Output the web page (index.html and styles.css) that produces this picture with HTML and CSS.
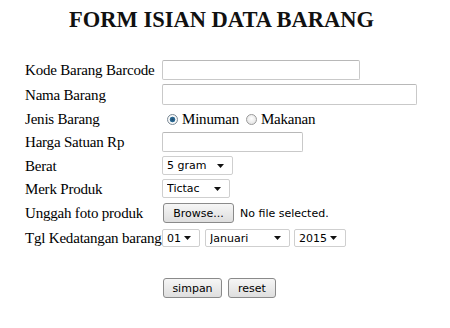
FILE: index.html
```html
<!DOCTYPE html>
<html lang="id">
<head>
    <meta charset="UTF-8">
    <title>Form Isian Data Barang</title>
    <link rel="stylesheet" href="styles.css">
</head>
<body>
    <h1 class="title">FORM ISIAN DATA BARANG</h1>

    <form class="item-form">
        <div class="row r1">
            <label for="kode">Kode Barang Barcode</label>
            <input type="text" id="kode" class="text-input w-kode">
        </div>
        <div class="row r2">
            <label for="nama">Nama Barang</label>
            <input type="text" id="nama" class="text-input w-nama">
        </div>
        <div class="row r3">
            <label>Jenis Barang</label>
            <div class="radios">
                <input type="radio" name="jenis" id="minuman" class="radio" checked>
                <label for="minuman">Minuman</label>
                <input type="radio" name="jenis" id="makanan" class="radio">
                <label for="makanan">Makanan</label>
            </div>
        </div>
        <div class="row r4">
            <label for="harga">Harga Satuan Rp</label>
            <input type="text" id="harga" class="text-input w-harga">
        </div>
        <div class="row r5">
            <label for="berat">Berat</label>
            <span class="select-wrap">
                <select id="berat" class="dropdown w-berat">
                    <option>5 gram</option>
                    <option>10 gram</option>
                </select>
                <svg class="caret" width="7" height="4" viewBox="0 0 7 4"><path d="M0 0H7L3.5 4Z" fill="#111"/></svg>
            </span>
        </div>
        <div class="row r6">
            <label for="merk">Merk Produk</label>
            <span class="select-wrap">
                <select id="merk" class="dropdown w-merk">
                    <option>Tictac</option>
                    <option>Mentos</option>
                </select>
                <svg class="caret" width="7" height="4" viewBox="0 0 7 4"><path d="M0 0H7L3.5 4Z" fill="#111"/></svg>
            </span>
        </div>
        <div class="row r7">
            <label>Unggah foto produk</label>
            <div class="file-field">
                <button type="button" class="btn btn-browse">Browse...</button>
                <span class="file-name">No file selected.</span>
            </div>
        </div>
        <div class="row r8">
            <label>Tgl Kedatangan barang</label>
            <div class="date-group">
                <span class="select-wrap">
                    <select class="dropdown w-tgl"><option>01</option></select>
                    <svg class="caret" width="7" height="4" viewBox="0 0 7 4"><path d="M0 0H7L3.5 4Z" fill="#111"/></svg>
                </span>
                <span class="select-wrap">
                    <select class="dropdown w-bulan"><option>Januari</option></select>
                    <svg class="caret" width="7" height="4" viewBox="0 0 7 4"><path d="M0 0H7L3.5 4Z" fill="#111"/></svg>
                </span>
                <span class="select-wrap">
                    <select class="dropdown w-tahun"><option>2015</option></select>
                    <svg class="caret" width="7" height="4" viewBox="0 0 7 4"><path d="M0 0H7L3.5 4Z" fill="#111"/></svg>
                </span>
            </div>
        </div>
        <div class="row actions">
            <span></span>
            <div class="buttons">
                <button type="submit" class="btn btn-save">simpan</button>
                <button type="reset" class="btn btn-reset">reset</button>
            </div>
        </div>
    </form>
</body>
</html>
```

FILE: styles.css
```css
* {
    box-sizing: border-box;
}

body {
    margin: 0;
    background: #fff;
    color: #000;
    font-family: "Liberation Serif", "Times New Roman", serif;
    font-size: 15px;
}

.title {
    margin: 6px 0 0;
    padding-right: 7px;
    font-size: 22.5px;
    line-height: 28px;
    font-weight: bold;
    text-align: center;
    color: #111;
}

.item-form {
    margin-top: 24px;
    padding-left: 25px;
}

.row {
    display: grid;
    grid-template-columns: 137px auto;
    align-items: center;
}

.row > * {
    justify-self: start;
}

.r1 { height: 24px; }
.r2 { height: 25px; }
.r3 { height: 24px; }
.r4 { height: 22px; }
.r5 { height: 25px; }
.r6 { height: 21px; }
.r7 { height: 28px; }
.r8 { height: 22px; }

.row > label,
.radios label {
    white-space: nowrap;
    line-height: 20px;
    letter-spacing: -0.2px;
}

.text-input {
    height: 20px;
    border: 1px solid #c9c9c9;
    border-top-color: #b8b8b8;
    border-radius: 2px;
    background: #fff;
    padding: 0 3px;
    outline: none;
}

.w-kode { width: 198px; }
.w-nama { width: 255px; height: 21px; }
.w-harga { width: 141px; }

.radios {
    display: flex;
    align-items: center;
    padding-left: 5px;
}

.radios label {
    margin-right: 7px;
}

.radio {
    appearance: none;
    -webkit-appearance: none;
    width: 11px;
    height: 11px;
    margin: 0 4px 0 0;
    border: 1px solid #9a9a9a;
    border-radius: 50%;
    background: radial-gradient(circle at 50% 40%, #fff, #dcdcdc);
}

.radio:checked {
    background: radial-gradient(circle, #1f4a6e 0, #2f6f99 2.5px, #fff 3.2px, #e2e2e2 100%);
    border-color: #7b8a96;
}

.select-wrap {
    position: relative;
    display: inline-block;
    line-height: 0;
}

.dropdown {
    appearance: none;
    -webkit-appearance: none;
    height: 19px;
    border: 1px solid #cfcfcf;
    border-radius: 2px;
    background: #fff;
    padding: 0 0 0 4px;
    font-family: "DejaVu Sans", Verdana, sans-serif;
    font-size: 11px;
    color: #000;
    outline: none;
}

.caret {
    position: absolute;
    right: 9px;
    top: 8px;
    pointer-events: none;
}

.w-berat { width: 71px; }
.w-merk { width: 68px; }
.w-tgl { width: 38px; height: 18px; }
.w-bulan { width: 85px; height: 18px; }
.w-tahun { width: 52px; height: 18px; }

.date-group {
    display: flex;
    gap: 5px;
}

.date-group .select-wrap + .select-wrap + .select-wrap {
    margin-left: -1px;
}

.date-group .caret {
    top: 7px;
}

.file-field {
    display: flex;
    align-items: center;
    gap: 6px;
    padding-left: 1px;
}

.file-name {
    font-family: "DejaVu Sans", Verdana, sans-serif;
    font-size: 11px;
}

.btn {
    height: 20px;
    padding: 0;
    border: 1px solid #8a8a8a;
    border-radius: 3px;
    background: linear-gradient(#f6f6f6, #dedede);
    font-family: "DejaVu Sans", Verdana, sans-serif;
    font-size: 11px;
    color: #000;
}

.btn-browse { width: 71px; }
.btn-save { width: 59px; }
.btn-reset { width: 48px; }

.actions {
    margin-top: 29px;
}

.buttons {
    display: flex;
    gap: 6px;
    padding-left: 1px;
}
```
